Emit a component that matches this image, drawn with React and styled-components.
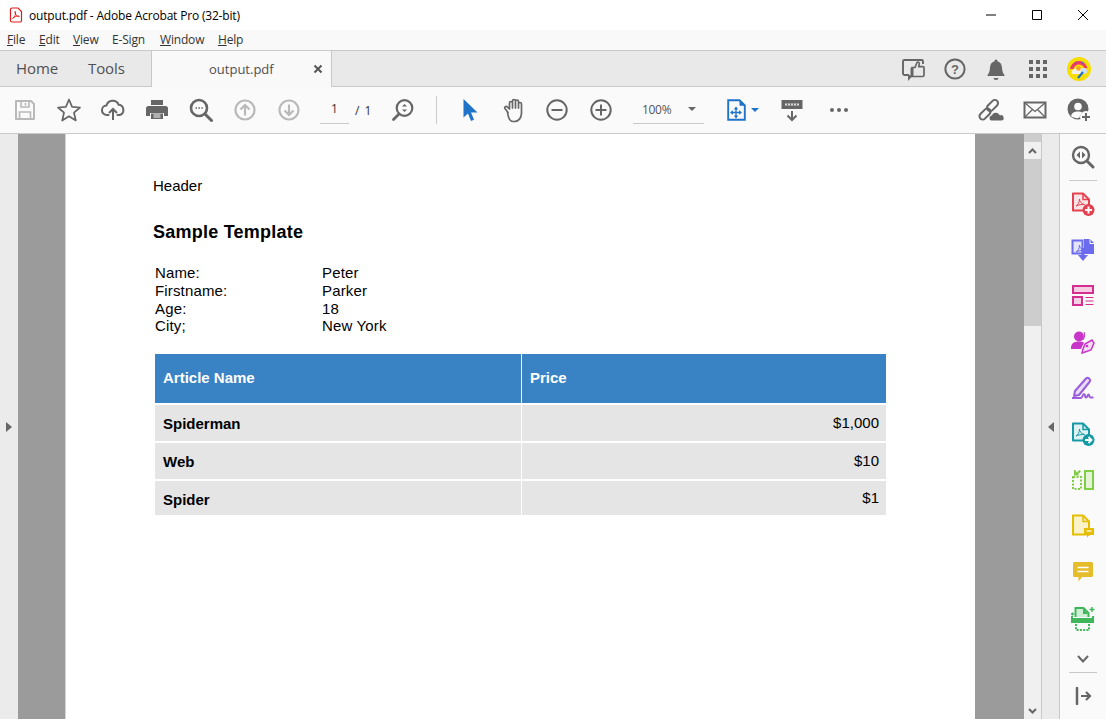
import React from 'react';
import styled, { createGlobalStyle } from 'styled-components';

const Global = createGlobalStyle`
  html, body { margin: 0; padding: 0; height: 100%; overflow: hidden; background: #fff; }
  #root { height: 100%; }
`;
const UI = `"Open Sans", "Noto Sans", sans-serif`;
const DOC = `"Liberation Sans", Arial, sans-serif`;

const Win = styled.div`width:1106px;height:719px;display:flex;flex-direction:column;overflow:hidden;font-family:${UI};`;
const TitleBar = styled.div`height:30px;flex:none;display:flex;align-items:center;background:#fff;`;
const AppIcon = styled.div`width:29px;display:flex;justify-content:center;padding-left:3px;box-sizing:border-box;`;
const TitleText = styled.div`font-size:12px;color:#000;flex:1;letter-spacing:-.18px;`;
const WinBtn = styled.div`width:46px;height:30px;display:flex;align-items:center;justify-content:center;`;
const MenuBar = styled.div`height:20px;flex:none;box-sizing:content-box;background:#f9f9f9;display:flex;align-items:center;padding-left:7px;border-bottom:1px solid #c9c9c9;`;
const MenuItem = styled.span`font-size:12px;color:#333;width:${p=>p.$w}px;letter-spacing:-.18px;margin-top:-2px;u{text-underline-offset:1px;}`;
const TabRow = styled.div`height:35px;flex:none;background:#e9e9e9;display:flex;align-items:stretch;border-bottom:1px solid #c9c9c9;`;
const NavTab = styled.div`width:${p=>p.$w}px;padding:0 0 2px ${p=>p.$pad}px;box-sizing:border-box;font-size:15px;color:#505050;display:flex;align-items:center;letter-spacing:-.1px;`;
const DocTab = styled.div`width:181px;margin-bottom:-1px;box-sizing:border-box;background:#f9f9f9;border-left:1px solid #c9c9c9;border-right:1px solid #c9c9c9;display:flex;align-items:center;font-size:13px;color:#505050;padding-left:57px;position:relative;`;
const TabClose = styled.span`margin-left:39px;display:flex;`;
const Spring = styled.div`flex:1;`;
const TopIcon = styled.div`width:${p=>p.$w||42}px;display:flex;align-items:center;justify-content:center;`;
const Toolbar = styled.div`height:46px;flex:none;background:#fafafa;display:flex;align-items:center;padding-left:3px;border-bottom:1px solid #c9c9c9;`;
const Slot = styled.div`width:${p=>p.$w||44}px;height:46px;flex:none;display:flex;align-items:center;justify-content:center;`;
const PageInput = styled.div`width:29px;height:27px;margin-left:9px;box-sizing:border-box;border-bottom:1px solid #c9c9c9;font-size:12px;color:#333;text-align:center;line-height:24px;margin-top:1px;`;
const PageTotal = styled.div`width:32px;padding-left:6px;box-sizing:border-box;font-size:12px;color:#333;word-spacing:2px;`;
const Divider = styled.div`width:1px;height:28px;background:#c9c9c9;margin:0 11px 0 11px;flex:none;`;
const ZoomBox = styled.div`width:71px;height:27px;margin:1px 10px 0 10px;box-sizing:border-box;border-bottom:1px solid #c9c9c9;display:flex;align-items:center;justify-content:space-between;padding:0 8px 2px 9px;font-size:12px;color:#555;letter-spacing:-.3px;`;
const Caret = styled.span`width:0;height:0;margin-left:${p=>p.$gap||0}px;border-left:4px solid transparent;border-right:4px solid transparent;border-top:4px solid ${p=>p.$c||'#666'};`;

const Body = styled.div`flex:1;display:flex;min-height:0;`;
const SidePanel = styled.div`width:${p=>p.$w}px;flex:none;background:#ebebeb;display:flex;align-items:center;justify-content:center;box-sizing:border-box;${p=>p.$border?'border-right:1px solid #c9c9c9;':''}`;
const Arrow = styled.span`width:0;height:0;border-top:5px solid transparent;border-bottom:5px solid transparent;${p=>p.$left?'border-right:6px solid #666;':'border-left:6px solid #666;'}`;
const Canvas = styled.div`flex:1;background:#9b9b9b;padding-left:47px;display:flex;min-width:0;`;
const Page = styled.div`width:910px;flex:none;box-sizing:border-box;background:#fff;border-left:1px solid #d4d4d4;padding:43px 0 0 87px;font-family:${DOC};font-size:15px;color:#000;overflow:hidden;`;
const DocHeader = styled.div`line-height:17px;`;
const DocTitle = styled.h1`margin:27px 0 0;font-size:18px;line-height:22px;font-weight:700;letter-spacing:.24px;`;
const Fields = styled.dl`margin:21px 0 0 2px;display:grid;grid-template-columns:167px 1fr;grid-template-rows:18px 17.500px 17px 17px;line-height:17px;letter-spacing:.15px;`;
const Term = styled.dt`margin:0;`;
const Value = styled.dd`margin:0;`;
const DataTable = styled.div`margin:20px 0 0 2px;width:731px;display:flex;flex-direction:column;gap:2px;`;
const Row = styled.div`display:grid;grid-template-columns:366px 364px;gap:1px;height:${p=>p.$h}px;`;
const Cell = styled.div`box-sizing:border-box;background:${p=>p.$head?'#3982c4':'#e5e5e5'};color:${p=>p.$head?'#fff':'#000'};font-weight:${p=>p.$plain?400:700};display:flex;align-items:center;padding:${p=>p.$top||0}px 7px ${p=>p.$head?2:0}px 8px;justify-content:${p=>p.$right?'flex-end':'flex-start'};`;

const Scrollbar = styled.div`width:18px;flex:none;box-sizing:border-box;background:#f0f0f0;border-right:1px solid #c9c9c9;display:flex;flex-direction:column;`;
const ScrollStub = styled.div`height:8px;background:#cdcdcd;`;
const ScrollBtn = styled.div`height:${p=>p.$h||17}px;display:flex;align-items:center;justify-content:center;flex:none;`;
const Thumb = styled.div`height:167px;background:#cdcdcd;flex:none;`;
const Tools = styled.div`width:46px;flex:none;background:#fafafa;display:flex;flex-direction:column;align-items:center;`;
const ToolSlot = styled.div`height:${p=>p.$h||46}px;width:46px;flex:none;display:flex;align-items:center;justify-content:center;box-sizing:border-box;padding-top:${p=>p.$top||0}px;`;
const ToolRule = styled.div`width:28px;height:1px;background:#c9c9c9;flex:none;`;

const Ic = ({ w = 24, h = 24, children, ...r }) => <svg width={w} height={h} viewBox={`0 0 ${w} ${h}`} fill="none" {...r}>{children}</svg>;
const G = '#666666';
const L = '#b9b9b9';

const PdfIcon = () => <Ic w={14} h={16}><path d="M1.500 2.500a1.500 1.500 0 0 1 1.500-1.500h6l3.500 3.500v9a1.500 1.500 0 0 1-1.500 1.500H3a1.500 1.500 0 0 1-1.500-1.500z" stroke="#e01b1b" strokeWidth="1.200"/><path d="M3.500 11.500c2-1 3.500-4 3-6.500-.2-1 -.9-.6-.6.500.4 1.800 1.800 3.800 3.800 4.200.8.1.8-.8-.3-.8-1.600 0-4 .8-5.900 2.600z" stroke="#e01b1b" strokeWidth=".9"/></Ic>;

const SaveI = () => <Ic><path d="M3 3h15l3 3v15H3z" stroke={L} strokeWidth="2" strokeLinejoin="round"/><path d="M8 3v6h8V3M12.500 5v2.500M6.500 21v-7h11v7" stroke={L} strokeWidth="1.600"/></Ic>;
const StarI = () => <Ic w={26} h={26}><path d="M13 2.500l3.100 7.300 7.900.7-6 5.200 1.800 7.800L13 19.300l-6.800 4.200L8 15.700l-6-5.200 7.900-.7z" stroke={G} strokeWidth="1.700" strokeLinejoin="round"/></Ic>;
const UploadI = () => <Ic><path d="M7.500 17H6a4.700 4.700 0 0 1-.6-9.400 6.500 6.500 0 0 1 12.300-.8A5.200 5.200 0 0 1 18.500 17H16.500" stroke={G} strokeWidth="2" strokeLinecap="round"/><path d="M12 22V11.500M8 15l4-4 4 4" stroke={G} strokeWidth="2"/></Ic>;
const PrintI = () => <Ic><path d="M6 2h12v5H6z" fill={G}/><path d="M3.500 8h17a2.500 2.500 0 0 1 2.500 2.500V18h-4v-3H5v3H1v-7.500A2.500 2.500 0 0 1 3.500 8z" fill={G}/><path d="M6 15.500h12V21H6z" fill={G}/><path d="M8.500 17h7M8.500 19h7" stroke="#fafafa" strokeWidth="1.100"/></Ic>;
const FindI = () => <Ic><circle cx="10" cy="10" r="8" stroke={G} strokeWidth="2.600"/><path d="M16 16l6.500 6.500" stroke={G} strokeWidth="3" strokeLinecap="round"/><path d="M6.500 10h1.500M9.400 10h1.500M12.300 10h1.500" stroke={G} strokeWidth="1.600"/></Ic>;
const UpI = ({ down }) => <Ic><circle cx="12" cy="12" r="9.500" stroke={L} strokeWidth="2.200"/><path d={down ? 'M12 6.500V17M7.500 12.500L12 17l4.500-4.500' : 'M12 17.500V7M7.500 11.500L12 7l4.500 4.500'} stroke={L} strokeWidth="2.200"/></Ic>;
const PageFindI = () => <Ic><circle cx="13.500" cy="10" r="7.800" stroke={G} strokeWidth="2.200"/><path d="M8 16l-5.500 5.500" stroke={G} strokeWidth="2.800" strokeLinecap="round"/><path d="M11 8.500l2.500-2.500 2.500 2.500zM11 11.500l2.500 2.500 2.500-2.500z" fill={G}/></Ic>;
const CursorI = () => <Ic><path d="M5.500 0v18.500l4.500-4 3 7.500 3-1.200-3-7.300h6.500z" fill="#1f73c9" transform="translate(0 1)"/></Ic>;
const HandI = () => <Ic w={26} h={26}><path d="M6 15.500L3 11.500c-1-1.500 1-3 2.300-1.600L7.500 12V6c0-2 3-2 3 0v5-7c0-2 3-2 3 0v7-6.500c0-2 3-2 3 0V11 7c0-2 3-2 3 0v9c0 5-3 8.500-7 8.500h-1.500c-3 0-4.500-2-5.500-9z" transform="translate(2 0)" stroke={G} strokeWidth="1.700" strokeLinejoin="round"/></Ic>;
const MinusI = ({ plus }) => <Ic><circle cx="12" cy="12" r="9.700" stroke={G} strokeWidth="2"/><path d={plus ? 'M6.500 12h11M12 6.500v11' : 'M6.500 12h11'} stroke={G} strokeWidth="2"/></Ic>;
const FitI = () => <Ic w={19} h={22}><path d="M1.200 1.200h11.300l5.300 5.300v14.300H1.200z" stroke="#1f73c9" strokeWidth="1.900"/><path d="M12.500 1.500v5.300h5z" fill="#1f73c9"/><path d="M9 8.500v10M4 13.500h10" stroke="#1f73c9" strokeWidth="1.300"/><path d="M6.800 10.500L9 7.500 11.200 10.500zM6.800 16.500L9 19.500 11.200 16.500zM6 11.300L3 13.500l3 2.200zM12 11.300l3 2.200-3 2.200z" fill="#1f73c9"/></Ic>;
const ExportI = () => <Ic w={24} h={24}><path d="M1.500 2h21v9h-21z" fill={G}/><path d="M5 5.500h14v2H5z" fill="#ddd"/><path d="M7.500 5.500v2M10.500 5.500v2M13.500 5.500v2M16.500 5.500v2" stroke={G}/><path d="M12 13v9M7.500 17.500L12 22l4.500-4.500" stroke={G} strokeWidth="2"/></Ic>;
const DotsI = () => <Ic w={20} h={6}><circle cx="3" cy="3" r="2" fill={G}/><circle cx="10" cy="3" r="2" fill={G}/><circle cx="17" cy="3" r="2" fill={G}/></Ic>;
const LinkI = () => <Ic w={26} h={26}><g stroke={G} strokeWidth="2"><rect x="-6.500" y="-3.200" width="13" height="6.400" rx="3.200" transform="translate(7 17) rotate(-45)"/><rect x="-6.500" y="-3.200" width="13" height="6.400" rx="3.200" transform="translate(14.500 8.500) rotate(-45)"/></g><path d="M13 24a3 3 0 0 1 .5-5.800 4.500 4.500 0 0 1 8.400-.3 3 3 0 0 1 2 6.100z" fill={G} stroke="#fafafa" strokeWidth="1"/></Ic>;
const MailI = () => <Ic w={24} h={20}><path d="M1.500 2.500h21v15h-21z" stroke={G} strokeWidth="2"/><path d="M2 3l10 8.500L22 3M2 17l7.500-7.500M22 17l-7.500-7.500" stroke={G} strokeWidth="1.300"/></Ic>;
const UserI = () => <Ic w={26} h={26}><circle cx="12" cy="12" r="10.500" fill={G}/><circle cx="12" cy="9.500" r="3.800" fill="#fafafa"/><path d="M5 19c1-3.500 3.500-4.500 7-4.500 1.500 0 3 .2 4 .9L13 21c-3 .5-6-.3-8-2z" fill="#fafafa"/><circle cx="20" cy="20" r="6" fill="#fafafa"/><path d="M20 16v8M16 20h8" stroke={G} strokeWidth="2"/></Ic>;

const FeedbackI = () => <Ic><path d="M8 18H3.500A1.500 1.500 0 0 1 2 16.500v-12A1.500 1.500 0 0 1 3.500 3h17A1.500 1.500 0 0 1 22 4.500V7M8 18v3.500L11 18" stroke={G} strokeWidth="1.900"/><path d="M11 10.500h3l1.800-4.500c.7-1.500 2.700-.8 2.500.7l-.5 3h4.200a1 1 0 0 1 1 1V18a1.500 1.500 0 0 1-1.500 1.500H11z" fill="#e9e9e9" stroke={G} strokeWidth="1.700"/><path d="M11 11v8.500" stroke={G} strokeWidth="3"/></Ic>;
const HelpI = () => <Ic><circle cx="12" cy="12" r="9.600" stroke={G} strokeWidth="2"/><text x="12" y="16.500" textAnchor="middle" fontFamily={DOC} fontSize="13" fontWeight="700" fill={G}>?</text></Ic>;
const BellI = () => <Ic><path d="M12 2.500a1.500 1.500 0 0 1 1.500 1.700c3 .8 4.300 3.400 4.500 6.300.2 3.500.7 5.500 2.500 7.500v1H3.500v-1c1.800-2 2.300-4 2.500-7.500.2-2.900 1.500-5.500 4.500-6.300A1.500 1.500 0 0 1 12 2.500z" fill={G}/><path d="M9.500 21h5a2.500 2 0 0 1-5 0z" fill={G}/></Ic>;
const GridI = () => <Ic w={18} h={18}>{[0,7,14].flatMap(y => [0,7,14].map(x => <rect key={`${x}${y}`} x={x} y={y} width="4" height="4" fill={G}/>))}</Ic>;
const Avatar = () => <Ic><circle cx="12" cy="12" r="12" fill="#f7de02"/><path d="M3 12c1-5.500 5.500-8 9-8s7 2.500 8.500 7l-3 .8c-1-3-3-4.300-5.500-4.300S7.500 9 6.500 12z" fill="#ec3a6a"/><path d="M4.500 16c0-3 3-5 7.500-5l7 1-3 5H5.500z" fill="#f6f0ea"/><circle cx="11.500" cy="11.500" r="2.300" fill="#f5a623"/><circle cx="17" cy="14" r="3" fill="#cfe0f5"/><path d="M16 15l-5 6" stroke="#1f73c9" strokeWidth="2.200"/><path d="M8 5l1.200 1M15 5l1.200 1" stroke="#3a6fd0" strokeWidth="1.400"/></Ic>;

const DocShape = ({ c, fill, children }) => <Ic w={24} h={26}><path d="M2 2.500h10l6 6v11H2z" fill={fill} stroke={c} strokeWidth="2" strokeLinejoin="round"/><path d="M12 2.500v6h6" stroke={c} strokeWidth="1.500"/>{children}</Ic>;
const AcroMark = ({ c }) => <path d="M5 15c2-1 3.500-3.500 3.500-7 0 2.500 1.500 4.500 5 5.500-3 0-6 .2-8.500 1.500z" stroke={c} strokeWidth="1" fill="none"/>;

const ZoomSide = () => <Ic><circle cx="10" cy="10" r="8" stroke={G} strokeWidth="2.400"/><path d="M16 16l6 6" stroke={G} strokeWidth="3" strokeLinecap="round"/><path d="M9 6.500v7L5.500 10zM11 6.500v7l3.500-3.500z" fill={G}/></Ic>;
const CreateI = () => <DocShape c="#e5404f" fill="#fbe4e6"><AcroMark c="#e5404f"/><circle cx="17.500" cy="19" r="6" fill="#e5404f"/><path d="M17.500 15.500v7M14 19h7" stroke="#fff" strokeWidth="2"/></DocShape>;
const CombineI = () => <Ic w={24} h={26}><path d="M1.500 3.500h10v13h-10z" fill="#e3e4fc" stroke="#6b6bed" strokeWidth="2"/><path d="M13 2h6l4 4v11H13z" fill="#6b6bed"/><path d="M19 2v4.500h4" stroke="#fafafa"/><AcroMark c="#6b6bed"/><path d="M12 11v9" stroke="#6b6bed" strokeWidth="3"/><path d="M7 18h10l-5 6z" fill="#6b6bed"/></Ic>;
const FormI = () => <Ic w={24} h={24}><path d="M2 2h20v7H2z" fill="#f6cfe2" stroke="#d42f90" strokeWidth="2"/><path d="M2 13h9v8H2z" fill="#f6cfe2" stroke="#d42f90" strokeWidth="2"/><path d="M14.500 13.500h8M14.500 17h8M14.500 20.500h8" stroke="#d42f90" strokeWidth="1.200"/></Ic>;
const ShareI = () => <Ic w={26} h={24}><circle cx="9" cy="6.500" r="5" fill="#c935c9"/><path d="M1 18c0-4.500 3-6.500 8-6.500 2 0 3.500.4 5 1l-3 6.500H1z" fill="#c935c9"/><path d="M14 2c1 3 .8 5-1 8" stroke="#c935c9" strokeWidth="1"/><path d="M15 14l7-4 2 3-3 7-6 2-3 1 1-4z" fill="#f5dcf5" stroke="#c935c9" strokeWidth="1.500"/><circle cx="17" cy="16" r="1.300" fill="#c935c9"/></Ic>;
const SignI = () => <Ic w={24} h={24}><path d="M4 15L15 2.500a2.100 2.100 0 0 1 3 0l.5.5a2.100 2.100 0 0 1 0 3L8 19l-5 1z" fill="#e8dcfa" stroke="#9b5ddc" strokeWidth="2" strokeLinejoin="round"/><path d="M1 22h9c1.500 0 1.500-4 3-4s.5 3.500 2 3.500 1.500-3 2.500-3 .5 3 2 3h3" stroke="#9b5ddc" strokeWidth="2"/></Ic>;
const SendI = () => <DocShape c="#149aa5" fill="#dff2f3"><AcroMark c="#149aa5"/><circle cx="17.500" cy="19" r="6" fill="#149aa5"/><path d="M14 19h6M17.500 16l3 3-3 3" stroke="#fff" strokeWidth="1.800"/></DocShape>;
const OrganizeI = () => <Ic w={22} h={22}><path d="M13 2h8v18h-8z" fill="#e4f4d6" stroke="#7fce45" strokeWidth="2"/><path d="M1 8h8v12H1z" stroke="#7fce45" strokeWidth="2" strokeDasharray="2 1.500"/><path d="M2 1v5.500h5.500L6 5l3-2.500L7.500 1 4.500 3.500 3.500 1z" fill="#7fce45"/></Ic>;
const CommentDocI = () => <Ic w={24} h={26}><path d="M2 2.500h10l6 6v13H2z" fill="#fbf2c8" stroke="#e5bd00" strokeWidth="2"/><path d="M12 2.500v6h6" stroke="#e5bd00" strokeWidth="1.500"/><path d="M13 15h10v7h-5l-2 3v-3h-3z" fill="#e5bd00"/><path d="M15.500 18h5" stroke="#fff" strokeWidth="1.200"/></Ic>;
const CommentI = () => <Ic w={22} h={22}><path d="M2.500 1h17a1.500 1.500 0 0 1 1.500 1.500v12a1.500 1.500 0 0 1-1.500 1.500H10l-3.500 4.500V16h-4A1.500 1.500 0 0 1 1 14.500v-12A1.500 1.500 0 0 1 2.500 1z" fill="#e5bd2a"/><path d="M5.500 6.500h11M5.500 10.500h11" stroke="#fff" strokeWidth="1.700"/></Ic>;
const ScanI = () => <Ic w={26} h={26}><path d="M1 9h3M2.500 7.500v3M22 2v5M19.500 4.500h5" stroke="#40b65a" strokeWidth="1.400"/><path d="M5.500 12V3h8l5 5v4" fill="#cfeed6" stroke="#40b65a" strokeWidth="2"/><path d="M13 3.500V9h5" fill="#40b65a"/><path d="M1 11h2v3h19v-3h2v7H1z" fill="#40b65a"/><path d="M2 13h22v4H2z" fill="#40b65a"/><path d="M6 19v6h13v-6" stroke="#40b65a" strokeWidth="2" strokeDasharray="2 1.300"/></Ic>;
const Chev = ({ up, w = 12, h = 8, sw = 2 }) => <Ic w={w} h={h}><path d={up ? `M1 ${h-1}L${w/2} 1.500 ${w-1} ${h-1}` : `M1 1L${w/2} ${h-1.500} ${w-1} 1`} stroke={G} strokeWidth={sw}/></Ic>;
const CollapseI = () => <Ic w={18} h={18}><path d="M3 1v16" stroke={G} strokeWidth="2.500" strokeLinecap="round"/><path d="M7 9h9M12 5l4 4-4 4" stroke={G} strokeWidth="2.200"/></Ic>;

const fields = [['Name:', 'Peter'], ['Firstname:', 'Parker'], ['Age:', '18'], ['City;', 'New York']];
const items = [['Spiderman', '$1,000', 36, 2], ['Web', '$10', 36, 2], ['Spider', '$1', 34, 4]];
const toolIcons = [CreateI, CombineI, FormI, ShareI, SignI, SendI, OrganizeI, CommentDocI, CommentI, ScanI];

export default function App() {
  return (
    <Win>
      <Global />
      <TitleBar>
        <AppIcon><PdfIcon /></AppIcon>
        <TitleText>output.pdf - Adobe Acrobat Pro (32-bit)</TitleText>
        <WinBtn><Ic w={12} h={12}><path d="M1 6h10" stroke="#000"/></Ic></WinBtn>
        <WinBtn><Ic w={12} h={12}><path d="M1.500 1.500h9v9h-9z" stroke="#000"/></Ic></WinBtn>
        <WinBtn><Ic w={12} h={12}><path d="M1 1l10 10M11 1L1 11" stroke="#000"/></Ic></WinBtn>
      </TitleBar>
      <MenuBar>
        <MenuItem $w={32}><u>F</u>ile</MenuItem>
        <MenuItem $w={34}><u>E</u>dit</MenuItem>
        <MenuItem $w={39}><u>V</u>iew</MenuItem>
        <MenuItem $w={48}>E-Sign</MenuItem>
        <MenuItem $w={58}><u>W</u>indow</MenuItem>
        <MenuItem $w={40}><u>H</u>elp</MenuItem>
      </MenuBar>
      <TabRow>
        <NavTab $w={72} $pad={16}>Home</NavTab>
        <NavTab $w={79} $pad={16}>Tools</NavTab>
        <DocTab>output.pdf<TabClose><Ic w={10} h={10}><path d="M1.500 1.500l7 7M8.500 1.500l-7 7" stroke="#555" strokeWidth="2"/></Ic></TabClose></DocTab>
        <Spring />
        <TopIcon><FeedbackI /></TopIcon>
        <TopIcon><HelpI /></TopIcon>
        <TopIcon $w={40}><BellI /></TopIcon>
        <TopIcon $w={44}><GridI /></TopIcon>
        <TopIcon $w={38}><Avatar /></TopIcon>
        <TopIcon $w={8} />
      </TabRow>
      <Toolbar>
        <Slot><SaveI /></Slot>
        <Slot><StarI /></Slot>
        <Slot><UploadI /></Slot>
        <Slot><PrintI /></Slot>
        <Slot><FindI /></Slot>
        <Slot><UpI /></Slot>
        <Slot><UpI down /></Slot>
        <PageInput>1</PageInput>
        <PageTotal>/ 1</PageTotal>
        <Slot><PageFindI /></Slot>
        <Divider />
        <Slot $w={43}><CursorI /></Slot>
        <Slot><HandI /></Slot>
        <Slot><MinusI /></Slot>
        <Slot><MinusI plus /></Slot>
        <ZoomBox>100%<Caret /></ZoomBox>
        <Slot $w={58}><FitI /><Caret $gap={5} $c="#1f73c9" /></Slot>
        <Slot $w={40}><ExportI /></Slot>
        <Slot $w={54}><DotsI /></Slot>
        <Spring />
        <Slot><LinkI /></Slot>
        <Slot><MailI /></Slot>
        <Slot><UserI /></Slot>
        <Slot $w={5} />
      </Toolbar>
      <Body>
        <SidePanel $w={18}><Arrow /></SidePanel>
        <Canvas>
          <Page>
            <DocHeader>Header</DocHeader>
            <DocTitle>Sample Template</DocTitle>
            <Fields>
              {fields.map(([k, v]) => <React.Fragment key={k}><Term>{k}</Term><Value>{v}</Value></React.Fragment>)}
            </Fields>
            <DataTable>
              <Row $h={49}><Cell $head>Article Name</Cell><Cell $head>Price</Cell></Row>
              {items.map(([n, p, h, t]) => <Row key={n} $h={h}><Cell $top={t}>{n}</Cell><Cell $plain $right>{p}</Cell></Row>)}
            </DataTable>
          </Page>
        </Canvas>
        <Scrollbar>
          <ScrollStub />
          <ScrollBtn><Chev up w={9} h={6} /></ScrollBtn>
          <Thumb />
          <Spring />
          <ScrollBtn><Chev w={9} h={6} /></ScrollBtn>
        </Scrollbar>
        <SidePanel $w={18} $border><Arrow $left /></SidePanel>
        <Tools>
          <ToolSlot><ZoomSide /></ToolSlot>
          <ToolRule />
          {toolIcons.map((I, i) => <ToolSlot key={i}><I /></ToolSlot>)}
          <ToolSlot $h={31} $top={5}><Chev /></ToolSlot>
          <ToolRule />
          <ToolSlot><CollapseI /></ToolSlot>
        </Tools>
      </Body>
    </Win>
  );
}
